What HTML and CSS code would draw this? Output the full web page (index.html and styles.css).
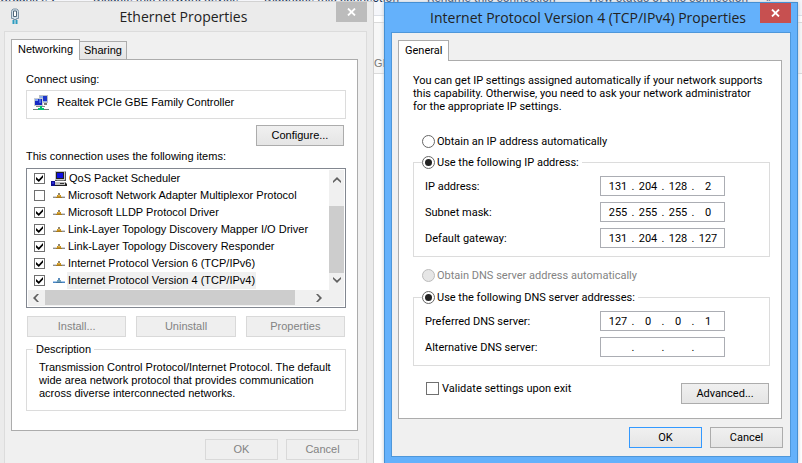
FILE: index.html
```
<!DOCTYPE html>
<html lang="en">
<head>
<meta charset="utf-8">
<title>Internet Protocol Version 4 (TCP/IPv4) Properties</title>
<link rel="stylesheet" href="styles.css">
</head>
<body>
<svg class="symbols" aria-hidden="true">
  <symbol id="close" viewBox="0 0 9 8"><path d="M1 .5 8 7.500M8 .5 1 7.500" fill="none" stroke="#fff" stroke-width="1.800"/></symbol>
  <symbol id="proto" viewBox="0 0 12 6"><path d="M0 4h12v1H0z" fill="#8d8d8d"/><path d="M0 3h12v1H0z" fill="#d4d4d4"/><path d="M5 0h2v2H5z" fill="#8f8672"/><path d="M4 2h4v3H4z" fill="#c8921e"/><path d="M5 2h2v1H5z" fill="#e6b64a"/><path d="M3 4h6v1H3z" fill="#a87a1c"/></symbol>
  <symbol id="proto-sel" viewBox="0 0 12 6"><path d="M0 4h12v1H0z" fill="#4a86c4"/><path d="M0 3h12v1H0z" fill="#a4c8ec"/><path d="M5 0h2v2H5z" fill="#5a8cbc"/><path d="M4 2h4v3H4z" fill="#6f9fb5"/><path d="M3 4h6v1H3z" fill="#3f74a0"/></symbol>
  <symbol id="arrow" viewBox="0 0 8 6"><path d="M0 4 4 0 8 4V6L4 2.500 0 6z" fill="#606060"/></symbol>
</svg>

<div class="desktop">
  <div class="explorer">
    <nav class="commands">
      <span>Organize ▾</span>
      <span>Disable this network device</span>
      <span>Diagnose this connection</span>
      <span>Rename this connection</span>
      <span>View status of this connection</span>
      <span>»</span>
    </nav>
    <div class="adapter">GB</div>
  </div>

  <section class="window ethernet" aria-labelledby="eth-title">
    <header class="titlebar">
      <svg class="plug" viewBox="0 0 10 16" aria-hidden="true"><path d="M1.500 3.500q0-2 2-2.500h3q2 .5 2 2.500v7H6.500v1h-3v-1h-2z" fill="#d5e3ec" stroke="#7c93a5"/><path d="M3.500 3h3v5.500h-3z" fill="#fff" stroke="#4f6577"/><path d="M2.500 12h2v4h-2zM5.500 12h2v4h-2z" fill="#2d9cc0"/></svg>
      <h1 id="eth-title">Ethernet Properties</h1>
      <button class="close" type="button" aria-label="Close"><svg><use href="#close"/></svg></button>
    </header>
    <div class="client">
      <div class="tabs" role="tablist">
        <button class="tab active" type="button" role="tab" aria-selected="true">Networking</button>
        <button class="tab" type="button" role="tab" aria-selected="false">Sharing</button>
      </div>
      <div class="panel" role="tabpanel">
        <p>Connect using:</p>
        <div class="device">
          <svg viewBox="0 0 16 16" aria-hidden="true"><path d="M6 0h9v8H6z" fill="#b9bfc6"/><path d="M7 1h7v6H7z" fill="#8fb0e8"/><path d="M10 1h4v5h-4z" fill="#1d35c9"/><path d="M11 8h3v2h-3z" fill="#777"/><path d="M1 3h9v8H1z" fill="#c9cdd2"/><path d="M2 4h7v6H2z" fill="#1528c4"/><path d="M2 4h3v2H2z" fill="#7fa3f0"/><path d="M6 4h2v4H6z" fill="#4b6be0"/><path d="M3 11h9v1H3z" fill="#888"/><path d="M7 11h2v2H7zM5 13h6v2H5z" fill="#00c070"/><path d="M0 14h5v1H0zM11 14h5v1h-5z" fill="#6b7f78"/></svg>
          <span>Realtek PCIe GBE Family Controller</span>
        </div>
        <div class="configure"><button class="btn" type="button">Configure...</button></div>
        <p>This connection uses the following items:</p>
        <div class="listbox">
          <ul class="items">
            <li><input id="i1" type="checkbox" checked><svg class="pc" viewBox="0 0 16 16" aria-hidden="true"><path d="M4 0h10l1 1v9H4z" fill="#555"/><path d="M4 0h10v9H4z" fill="#c8c8c8"/><path d="M5 1h8v7H5z" fill="#222"/><path d="M6 2h6v5H6z" fill="#1010e0"/><path d="M3 11h11l2 2v2H3z" fill="#222"/><path d="M4 11h10v3H4z" fill="#bdbdbd"/><path d="M9 12h4v1H9z" fill="#333"/><path d="M0 10h4v5H0z" fill="#101090"/><path d="M1 11h2v2H1z" fill="#2b2bdc"/><path d="M6 9h7v1H6z" fill="#777"/></svg><label for="i1">QoS Packet Scheduler</label></li>
            <li><input id="i2" type="checkbox"><svg class="proto"><use href="#proto"/></svg><label for="i2">Microsoft Network Adapter Multiplexor Protocol</label></li>
            <li><input id="i3" type="checkbox" checked><svg class="proto"><use href="#proto"/></svg><label for="i3">Microsoft LLDP Protocol Driver</label></li>
            <li><input id="i4" type="checkbox" checked><svg class="proto"><use href="#proto"/></svg><label for="i4">Link-Layer Topology Discovery Mapper I/O Driver</label></li>
            <li><input id="i5" type="checkbox" checked><svg class="proto"><use href="#proto"/></svg><label for="i5">Link-Layer Topology Discovery Responder</label></li>
            <li><input id="i6" type="checkbox" checked><svg class="proto"><use href="#proto"/></svg><label for="i6">Internet Protocol Version 6 (TCP/IPv6)</label></li>
            <li class="selected"><input id="i7" type="checkbox" checked><svg class="proto"><use href="#proto-sel"/></svg><label for="i7">Internet Protocol Version 4 (TCP/IPv4)</label></li>
          </ul>
          <div class="vscroll" aria-hidden="true"><svg class="arrow"><use href="#arrow"/></svg><div class="track"><div class="thumb"></div></div><svg class="arrow down"><use href="#arrow"/></svg></div>
          <div class="hscroll" aria-hidden="true"><svg class="arrow left"><use href="#arrow"/></svg><div class="thumb"></div><svg class="arrow right"><use href="#arrow"/></svg></div>
        </div>
        <div class="actions">
          <button class="btn" type="button" disabled>Install...</button>
          <button class="btn" type="button" disabled>Uninstall</button>
          <button class="btn" type="button" disabled>Properties</button>
        </div>
        <fieldset class="group description">
          <legend>Description</legend>
          <p>Transmission Control Protocol/Internet Protocol. The default<br>wide area network protocol that provides communication<br>across diverse interconnected networks.</p>
        </fieldset>
      </div>
      <footer class="buttons">
        <button class="btn" type="button" disabled>OK</button>
        <button class="btn" type="button" disabled>Cancel</button>
      </footer>
    </div>
  </section>

  <section class="window ipv4" aria-labelledby="ip-title">
    <header class="titlebar">
      <span></span>
      <h1 id="ip-title">Internet Protocol Version 4 (TCP/IPv4) Properties</h1>
      <button class="close" type="button" aria-label="Close"><svg><use href="#close"/></svg></button>
    </header>
    <form class="client">
      <div class="tabs" role="tablist">
        <button class="tab active" type="button" role="tab" aria-selected="true">General</button>
      </div>
      <div class="panel" role="tabpanel">
        <p>You can get IP settings assigned automatically if your network supports<br>this capability. Otherwise, you need to ask your network administrator<br>for the appropriate IP settings.</p>

        <div class="choice auto-ip"><input id="ip-auto" type="radio" name="ip"><label for="ip-auto">Obtain an IP address automatically</label></div>
        <fieldset class="group addresses">
          <legend class="choice"><input id="ip-manual" type="radio" name="ip" checked><label for="ip-manual">Use the following IP address:</label></legend>
          <div class="row"><label for="ip1">IP address:</label>
            <span class="ip"><input id="ip1" value="131" aria-label="IP address, part 1"><i>.</i><input value="204" aria-label="IP address, part 2"><i>.</i><input value="128" aria-label="IP address, part 3"><i>.</i><input value="2" aria-label="IP address, part 4"></span></div>
          <div class="row"><label for="sm1">Subnet mask:</label>
            <span class="ip"><input id="sm1" value="255" aria-label="Subnet mask, part 1"><i>.</i><input value="255" aria-label="Subnet mask, part 2"><i>.</i><input value="255" aria-label="Subnet mask, part 3"><i>.</i><input value="0" aria-label="Subnet mask, part 4"></span></div>
          <div class="row"><label for="gw1">Default gateway:</label>
            <span class="ip"><input id="gw1" value="131" aria-label="Default gateway, part 1"><i>.</i><input value="204" aria-label="Default gateway, part 2"><i>.</i><input value="128" aria-label="Default gateway, part 3"><i>.</i><input value="127" aria-label="Default gateway, part 4"></span></div>
        </fieldset>

        <div class="choice auto-dns"><input id="dns-auto" type="radio" name="dns" disabled><label for="dns-auto">Obtain DNS server address automatically</label></div>
        <fieldset class="group addresses">
          <legend class="choice"><input id="dns-manual" type="radio" name="dns" checked><label for="dns-manual">Use the following DNS server addresses:</label></legend>
          <div class="row"><label for="pd1">Preferred DNS server:</label>
            <span class="ip"><input id="pd1" value="127" aria-label="Preferred DNS server, part 1"><i>.</i><input value="0" aria-label="Preferred DNS server, part 2"><i>.</i><input value="0" aria-label="Preferred DNS server, part 3"><i>.</i><input value="1" aria-label="Preferred DNS server, part 4"></span></div>
          <div class="row"><label for="ad1">Alternative DNS server:</label>
            <span class="ip"><input id="ad1" value="" aria-label="Alternative DNS server, part 1"><i>.</i><input value="" aria-label="Alternative DNS server, part 2"><i>.</i><input value="" aria-label="Alternative DNS server, part 3"><i>.</i><input value="" aria-label="Alternative DNS server, part 4"></span></div>
        </fieldset>

        <div class="extras">
          <div class="validate"><input id="validate" type="checkbox"><label for="validate">Validate settings upon exit</label></div>
          <button class="btn" type="button">Advanced...</button>
        </div>
      </div>
      <footer class="buttons">
        <button class="btn default" type="button">OK</button>
        <button class="btn" type="button">Cancel</button>
      </footer>
    </form>
  </section>
</div>
</body>
</html>
```
FILE: styles.css
```
* { box-sizing: border-box; }

body {
  margin: 0;
  background: #fff;
  color: #000;
  font: 11px/13px "Liberation Sans", sans-serif;
}

p, h1, ul, fieldset, legend { margin: 0; padding: 0; }
button, input { margin: 0; font: inherit; color: inherit; }
svg { display: block; flex: none; }
.symbols { position: absolute; width: 0; height: 0; }

.desktop {
  position: relative;
  display: grid;
  grid-template-columns: 374fr 414fr;
  column-gap: 10px;
  align-items: start;
  height: 100vh;
  padding-right: 4px;
  overflow: hidden;
}

/* Explorer window behind the dialogs */
.explorer { position: absolute; inset: 0; }

.commands {
  display: grid;
  grid-template-columns: 93px 171px 163px 160px 179px auto;
  height: 16px;
  align-items: start;
  overflow: hidden;
  background: #f5f6fa;
  border-bottom: 1px solid #dcdfe6;
  color: #1e395b;
  font: 12px/16px Roboto, sans-serif;
  white-space: nowrap;
}
.commands span { margin-top: -10px; }

.adapter {
  height: 52px;
  margin-top: 6px;
  padding: 34px 0 0 374px;
  border: solid #dadada;
  border-width: 1px 0;
  background: #f7f7f7;
  color: #777;
}

/* Windows */
.window { position: relative; min-width: 0; border: 1px solid; }

.ethernet {
  min-height: calc(100vh - 1px);
  margin-top: 1px;
  border-color: #d2d2d2;
  border-width: 1px 1px 0 0;
  background: #ebebeb;
}

.ipv4 {
  margin-top: 2px;
  padding-bottom: 6px;
  border-color: #458fd2;
  background: #64b1fb;
  box-shadow: 0 0 4px #b9c3cf;
  font-family: Roboto, sans-serif;
}

.titlebar {
  display: grid;
  grid-template-columns: 1fr auto 1fr;
  height: 29px;
  padding-right: 6px;
}

.titlebar h1 {
  color: #222;
  font: 14px/29px "Open Sans", sans-serif;
  white-space: nowrap;
}

.plug { width: 10px; height: 16px; margin: 6px 0 0 10px; }

.close {
  display: grid;
  place-items: center;
  justify-self: end;
  width: 31px;
  height: 20px;
  padding: 0;
  border: 0;
  background: #bcbcbc;
}
.close svg { width: 9px; height: 8px; }
.ipv4 .close { background: #c75050; }

.client {
  display: block;
  padding: 7px 7px 8px 6px;
  border: 1px solid #dcdcdc;
  background: #f0f0f0;
}
.ethernet .client { margin: 0 6px 0 4px; }
.ipv4 .client { margin: 0 6px; border-color: #4e97da; }

/* Tabs */
.tabs { position: relative; display: flex; align-items: flex-end; }

.tab {
  height: 18px;
  padding: 0 4px;
  border: 1px solid #acacac;
  border-width: 1px 1px 0 0;
  background: linear-gradient(#f0f0f0, #e5e5e5);
}
.tab.active {
  height: 21px;
  margin-bottom: -1px;
  padding: 0 6px 2px;
  border-left-width: 1px;
  background: #fff;
}

.panel {
  margin-right: 1px;
  border: 1px solid #acacac;
  padding: 13px 11px 19px 14px;
  background: #fff;
}
.ipv4 .panel { padding-bottom: 14px; }

/* Buttons */
.btn {
  height: 21px;
  padding: 0 4px;
  border: 1px solid #acacac;
  background: linear-gradient(#f0f0f0, #e5e5e5);
}
.btn:disabled { border-color: #d9d9d9; background: #efefef; color: #838383; }
.btn.default { border-color: #3399ff; }

.buttons { display: flex; justify-content: flex-end; gap: 8px; margin-top: 8px; }
.buttons .btn { width: 73px; }

/* Ethernet dialog */
.device {
  display: flex;
  align-items: center;
  gap: 8px;
  height: 29px;
  margin: 4px 0 6px;
  padding: 0 6px 4px;
  border: 1px solid #dcdcdc;
}
.device svg { width: 16px; height: 16px; }

.configure { display: flex; justify-content: flex-end; margin: 0 2px 4px; }
.configure .btn { width: 88px; }

.listbox {
  display: grid;
  grid-template-columns: 1fr 15px;
  margin: 5px 0 8px;
  padding: 1px;
  border: 1px solid #828790;
}

.items { padding: 0 0 1px; list-style: none; }
.items li { display: flex; align-items: center; height: 17px; padding-left: 6px; }
.items svg { margin-left: 8px; }
.items .proto { width: 12px; height: 6px; }
.items .pc { width: 16px; height: 16px; margin-left: 6px; margin-right: -2px; }
.items label { margin-left: 2px; padding: 2px 1px; white-space: nowrap; }
.items .pc + label { padding-left: 2px; }
.selected label { background: #f0f0f0; }

input[type="checkbox"] {
  appearance: none;
  flex: none;
  width: 11px;
  height: 11px;
  border: 1px solid #707070;
  background: #fff;
}
.items input:checked { display: grid; place-items: center; }
.items input:checked::before {
  content: "";
  width: 7px;
  height: 7px;
  background: #000;
  clip-path: polygon(0 28%, 40% 64%, 100% 0, 100% 36%, 40% 100%, 0 64%);
}

.vscroll, .hscroll { display: flex; align-items: center; background: #f0f0f0; }
.vscroll { flex-direction: column; padding: 7px 0; }
.hscroll { grid-column: 1 / -1; height: 16px; padding: 0 21px 0 4px; }
.arrow { width: 8px; height: 6px; }
.down { transform: rotate(180deg); }
.left { transform: rotate(-90deg); }
.right { transform: rotate(90deg); margin-left: auto; }
.thumb { background: #cdcdcd; }
.track { flex: 1; width: 100%; padding-top: 23px; }
.vscroll .thumb { height: 67px; }
.hscroll .thumb { width: 86%; height: 15px; margin-left: 5px; align-self: flex-start; }

.actions {
  display: grid;
  grid-template-columns: repeat(3, 1fr);
  gap: 10px;
  margin: 0 1px 6px;
}

.group { min-width: 0; border: 1px solid #dcdcdc; }
.description { padding: 0 6px 10px; }
.description legend { padding: 0 3px; }
.description p { padding: 5px 0 0 6px; white-space: nowrap; }

/* TCP/IPv4 dialog */
.choice { display: flex; align-items: center; gap: 2px; height: 13px; }
.auto-ip { margin: 22px 0 8px 9px; }
.auto-dns { margin: 12px 0 9px 9px; color: #838383; }

input[type="radio"] {
  appearance: none;
  display: grid;
  place-items: center;
  width: 13px;
  height: 13px;
  border: 1px solid #666;
  border-radius: 50%;
  background: #fff;
}
input[type="radio"]:checked::before {
  content: "";
  width: 7px;
  height: 7px;
  border-radius: 50%;
  background: #222;
}
input[type="radio"]:disabled { border-color: #bcbcbc; background: #e6e6e6; }

.addresses { padding: 0 44px 8px 8px; }
.addresses legend { padding-right: 3px; }
.row {
  display: flex;
  justify-content: space-between;
  align-items: center;
  margin-top: 6px;
  padding-left: 3px;
}
legend + .row { margin-top: 7px; }

.ip {
  display: flex;
  align-items: center;
  width: 125px;
  height: 20px;
  padding-left: 5px;
  border: 1px solid #abadb3;
}
.ip input {
  width: 24px;
  height: 16px;
  padding: 0;
  border: 0;
  background: none;
  text-align: center;
}
.ip i { width: 6px; font-style: normal; text-align: center; }

.extras { display: flex; justify-content: space-between; height: 22px; margin: 16px 1px 0 13px; }
.extras .btn { align-self: flex-end; width: 88px; }
.validate { display: flex; align-items: center; gap: 3px; height: 13px; }
.validate input { width: 13px; height: 13px; }
```
